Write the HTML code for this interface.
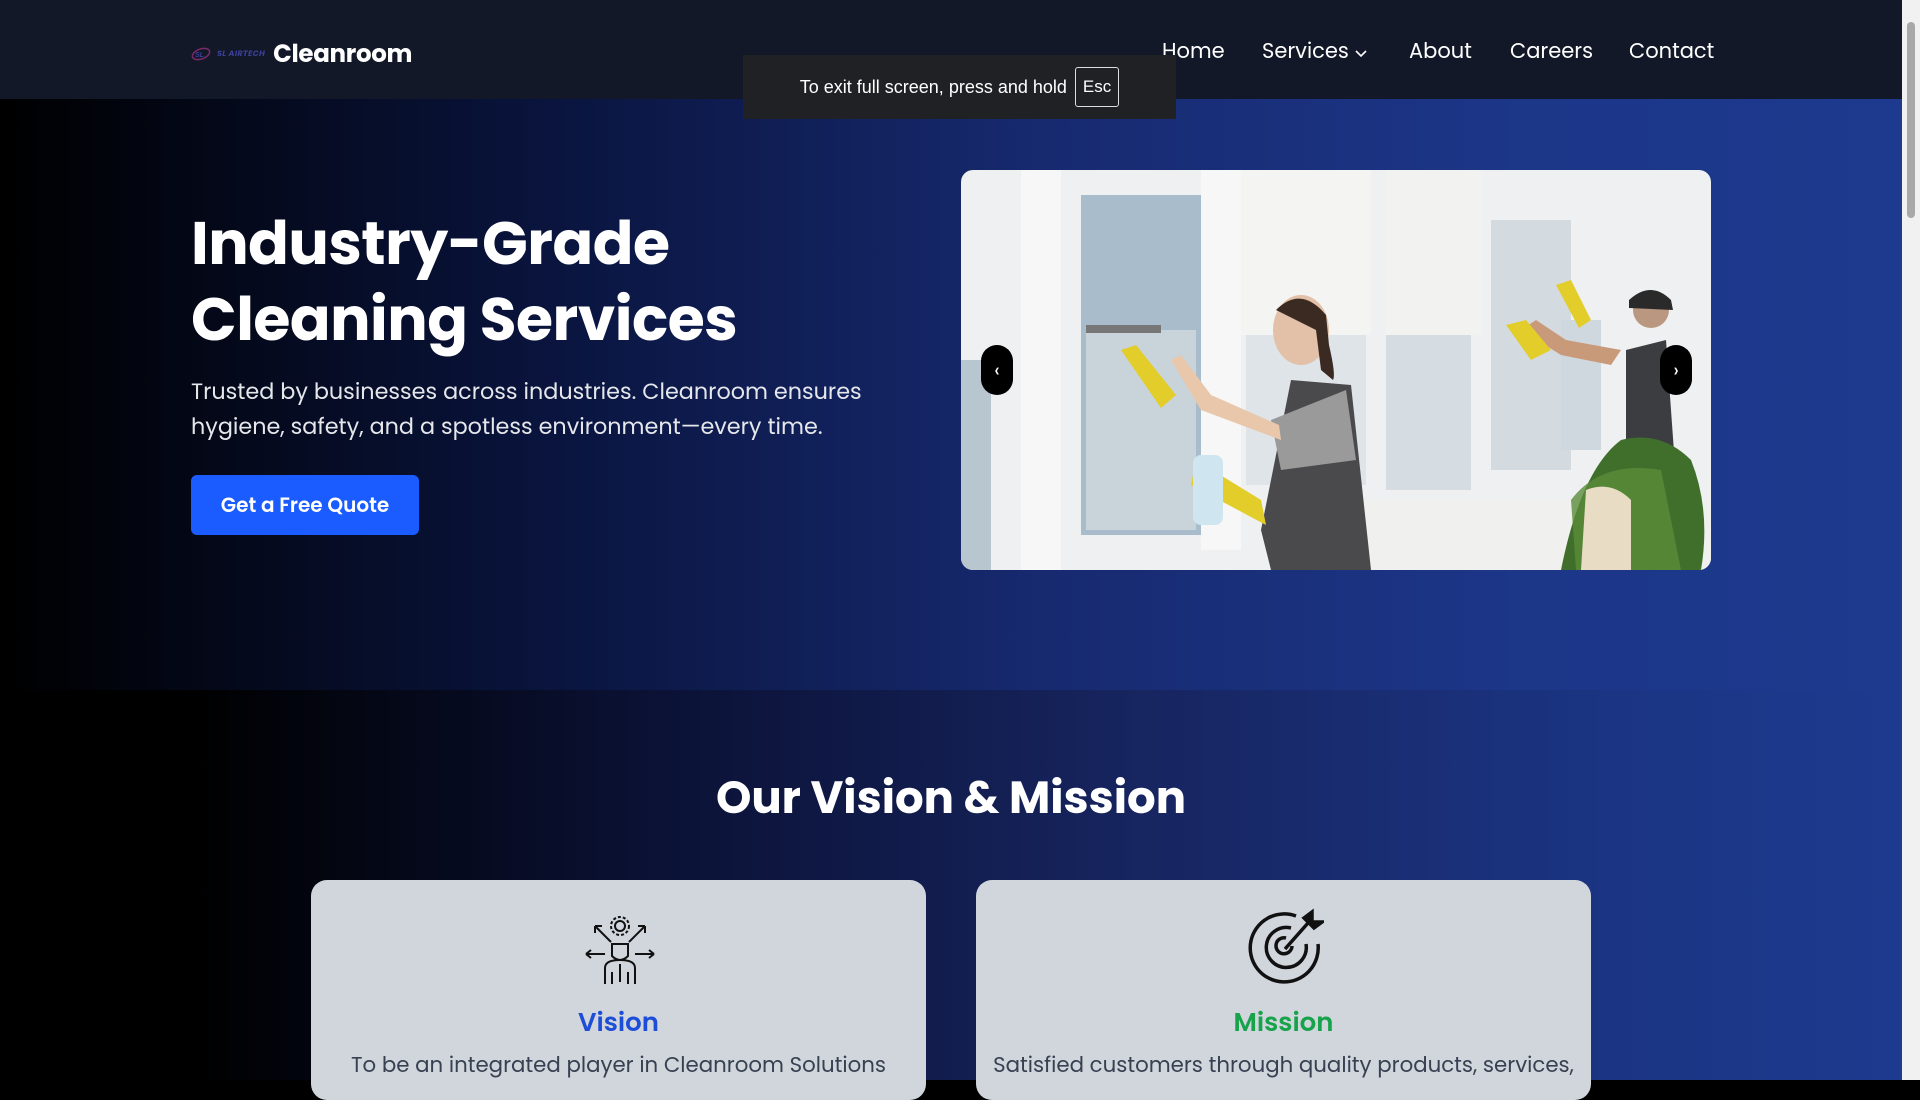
<!DOCTYPE html>
<html><head><meta charset="utf-8"><style>
*{margin:0;padding:0;box-sizing:border-box}
html,body{width:1920px;height:1080px;overflow:hidden;font-family:"Poppins","Liberation Sans",sans-serif;background:#000}
.nav{position:absolute;left:0;top:0;width:1902px;height:99px;background:#121827}
.logo{position:absolute;left:191px;top:35px;display:flex;align-items:center}
.logo .sl{font-size:8px;font-style:italic;font-weight:bold;color:#3b3f9a;margin-left:6px;letter-spacing:.3px}
.logo .cr{font-size:24.5px;font-weight:bold;color:#fff;margin-left:8px;letter-spacing:-.3px}
.links a{position:absolute;top:36px;color:#fff;font-size:21px;text-decoration:none}
.toast{position:absolute;left:743px;top:55px;width:433px;height:64px;background:#202124;color:#fff;font-size:18px;font-family:"Liberation Sans",sans-serif;display:flex;align-items:center;justify-content:center}
.toast span{border:1px solid #ddd;border-radius:3px;padding:9px 7px;margin-left:8px;font-size:17px}
.hero{position:absolute;left:0;top:99px;width:1902px;height:591px;background:linear-gradient(90deg,#000 0%,#0a1540 30%,#172a70 55%,#1c3688 80%,#1d3a8e 100%)}
.sec2{position:absolute;left:0;top:690px;width:1902px;height:390px;background:linear-gradient(90deg,#000 10%,#0b1236 35%,#172560 60%,#1b3584 85%,#1d3a8e 100%)}
h1{position:absolute;left:191px;top:205px;color:#fff;font-size:60px;line-height:76px;font-weight:bold;letter-spacing:-.5px}
.p{position:absolute;left:191px;top:374px;color:#e5e7eb;font-size:22.3px;line-height:35px;width:720px}
.btn{position:absolute;left:191px;top:475px;width:228px;height:60px;background:#1a5cff;border-radius:6px;color:#fff;font-size:20px;font-weight:600;display:flex;align-items:center;justify-content:center}
.img{position:absolute;left:961px;top:170px;width:750px;height:400px;border-radius:12px;overflow:hidden}
.arr{position:absolute;width:32px;height:50px;background:#000;border-radius:16px;color:#fff;font-size:20px;display:flex;align-items:center;justify-content:center}
h2{position:absolute;left:0;width:1902px;text-align:center;top:764px;color:#fff;font-size:45px;font-weight:bold}
.card{position:absolute;top:880px;width:615px;height:220px;background:#d1d5dc;border-radius:16px;text-align:center}
.card h3{position:absolute;top:124px;width:100%;font-size:26px;font-weight:600}
.card p{position:absolute;top:170px;width:100%;font-size:21.3px;color:#374151}
.sb{position:absolute;right:0;top:0;width:18px;height:1080px;background:#f1f1f1}
.sb div{position:absolute;left:5px;top:22px;width:8px;height:196px;background:#a8a8a8;border-radius:4px}
</style></head><body>
<div class="nav">
 <div class="logo"><svg width="20" height="14" viewBox="0 0 20 14"><ellipse cx="10" cy="7" rx="9" ry="5" fill="none" stroke="#7a2a6a" stroke-width="1.5" transform="rotate(-20 10 7)"/><text x="4" y="10" font-size="7" font-style="italic" font-weight="bold" fill="#3b3f9a" font-family="Liberation Sans">SL</text></svg><span class="sl">SL AIRTECH</span><span class="cr">Cleanroom</span></div>
 <div class="links"><a style="left:1162px">Home</a><a style="left:1262px">Services <svg width="14" height="10" viewBox="0 0 14 10"><path d="M2 3l5 5 5-5" fill="none" stroke="#fff" stroke-width="1.6"/></svg></a><a style="left:1409px">About</a><a style="left:1510px">Careers</a><a style="left:1629px">Contact</a></div>
</div>
<div class="hero"></div>
<div class="sec2"></div>
<h1>Industry-Grade<br>Cleaning Services</h1>
<div class="p">Trusted by businesses across industries. Cleanroom ensures hygiene, safety, and a spotless environment—every time.</div>
<div class="btn">Get a Free Quote</div>
<div class="img"><svg width="750" height="400" viewBox="0 0 750 400">
<rect width="750" height="400" fill="#eef0f1"/>
<rect x="120" y="25" width="120" height="340" fill="#a9bccb"/>
<rect x="125" y="160" width="110" height="200" fill="#c9d3da"/>
<rect x="0" y="190" width="30" height="210" fill="#b8c6d0"/>
<rect x="285" y="165" width="120" height="150" fill="#dfe4e8"/>
<rect x="425" y="165" width="85" height="155" fill="#d6dde2"/>
<rect x="530" y="50" width="80" height="250" fill="#d3dbe1"/>
<rect x="600" y="150" width="40" height="130" fill="#cfd8de"/>
<path d="M60 0h40v400H60z M240 0h40v380h-40z" fill="#f7f7f7"/>
<rect x="280" y="0" width="130" height="165" fill="#f4f4f2"/>
<rect x="425" y="0" width="95" height="165" fill="#f2f2f0"/>
<rect x="380" y="330" width="370" height="70" fill="#f0f0ee"/>
<path d="M300 360 L330 210 L390 215 L410 400 L310 400Z" fill="#4a4a4c"/>
<path d="M310 250 L385 220 L395 290 L320 300Z" fill="#9a9a9a"/>
<ellipse cx="340" cy="160" rx="28" ry="35" fill="#e3c1a8"/>
<path d="M315 140 Q340 115 365 145 L368 175 Q375 205 372 210 L360 200 L355 160Z" fill="#3a2a22"/>
<path d="M210 190 L240 240 L320 270 L318 255 L250 225 L220 185Z" fill="#e9c7ab"/>
<path d="M160 180 L175 175 L215 225 L200 238Z" fill="#e3cd2a"/>
<path d="M235 290 L300 330 L305 355 L230 315Z" fill="#e3cd2a"/>
<rect x="232" y="285" width="30" height="70" rx="8" fill="#cfe6f0"/>
<path d="M125 155 h75 v8 h-75z" fill="#777"/>
<path d="M665 180 L705 170 L720 380 L665 380Z" fill="#3c3d40"/>
<circle cx="690" cy="140" r="18" fill="#b99781"/>
<path d="M668 130 Q690 110 710 130 L712 140 L668 138Z" fill="#2a2a2a"/>
<path d="M560 160 L600 185 L650 195 L660 180 L605 170 L575 150Z" fill="#c99a7a"/>
<path d="M545 155 L565 150 L590 180 L570 190Z" fill="#e3cd2a"/>
<path d="M595 115 L610 110 L630 150 L618 158Z" fill="#e3cd2a"/>
<path d="M600 400 Q620 300 660 270 Q700 260 730 290 Q750 340 740 400Z" fill="#3f6f2b"/>
<path d="M610 330 Q640 290 700 300 L720 400 L615 400Z" fill="#5a8c3a" opacity=".8"/>
<path d="M620 400 L625 320 Q650 310 670 330 L670 400Z" fill="#e8dcc5"/>
</svg>
<div class="arr" style="left:20px;top:175px">‹</div><div class="arr" style="left:699px;top:175px">›</div></div>
<h2>Our Vision &amp; Mission</h2>
<div class="card" style="left:311px">
 <svg style="position:absolute;left:272px;top:32px" width="74" height="74" viewBox="0 0 74 74" fill="none" stroke="#111" stroke-width="2"><circle cx="37" cy="14" r="5"/><circle cx="37" cy="14" r="9" stroke-dasharray="3 2"/><path d="M28 30 L12 14 M12 14h7 M12 14v7 M46 30 L62 14 M62 14h-7 M62 14v7 M22 42H3 M3 42l5-4 M3 42l5 4 M52 42h19 M71 42l-5-4 M71 42l-5 4"/><path d="M29 32h16v12 q-8 8-16 0z"/><path d="M22 72V56 q0-8 15-8 q15 0 15 8v16 M29 60v12 M45 60v12 M37 52v18" /></svg>
 <h3 style="color:#1d4ed8">Vision</h3><p>To be an integrated player in Cleanroom Solutions</p></div>
<div class="card" style="left:976px">
 <svg style="position:absolute;left:270px;top:28px" width="78" height="80" viewBox="0 0 78 80" fill="none" stroke="#111" stroke-width="3.5"><path d="M50 8 A34 34 0 1 0 72 36"/><path d="M45 20 A20 20 0 1 0 60 36"/><path d="M40 30 A8 8 0 1 0 46 38"/><path d="M39 41 L62 15"/><path d="M58 10 l8-6 v10 h10 l-8 6z" fill="#111"/></svg>
 <h3 style="color:#16a34a">Mission</h3><p>Satisfied customers through quality products, services,</p></div>
<div class="toast">To exit full screen, press and hold<span>Esc</span></div>
<div class="sb"><div></div></div>
</body></html>
